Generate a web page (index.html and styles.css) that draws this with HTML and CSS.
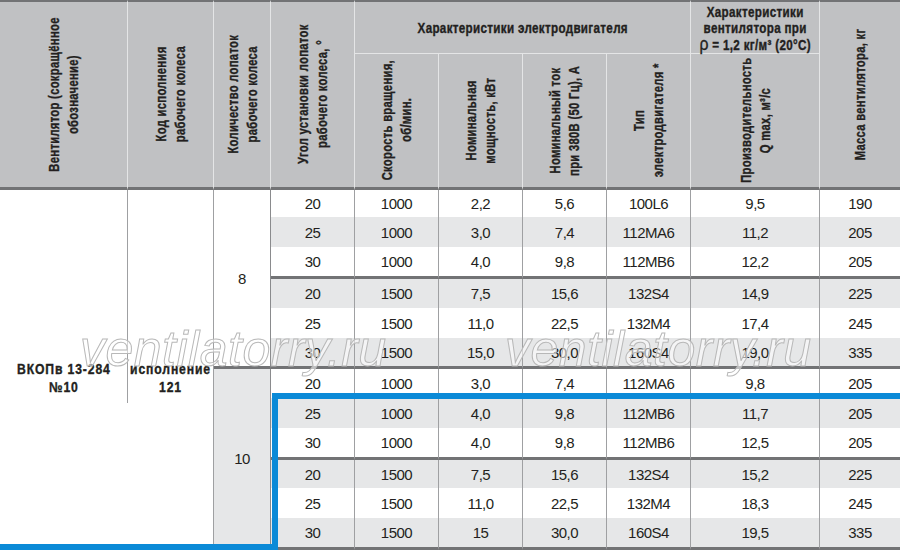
FILE: index.html
```html
<!DOCTYPE html>
<html lang="ru">
<head>
<meta charset="utf-8">
<title>ВКОПв 13-284 №10</title>
<link rel="stylesheet" href="styles.css">
</head>
<body>
<div class="sheet">
  <div class="table">
    <div class="h h-r1 h-tall"><div class="rot">Вентилятор (сокращённое<br>обозначение)</div></div>
    <div class="h h-r1 h-tall"><div class="rot">Код исполнения<br>рабочего колеса</div></div>
    <div class="h h-r1 h-tall"><div class="rot">Количество лопаток<br>рабочего колеса</div></div>
    <div class="h h-r1 h-tall"><div class="rot">Угол установки лопаток<br>рабочего колеса, °</div></div>
    <div class="h h-r1 h-group"><span class="hx">Характеристики электродвигателя</span></div>
    <div class="h h-r1 h-fan"><span class="hx">Характеристики<br>вентилятора при<br><span class="rho">ρ</span> = 1,2 кг/м³ (20°C)</span></div>
    <div class="h h-r1 h-tall h-last"><div class="rot">Масса вентилятора, кг</div></div>
    <div class="h h-sub"><div class="rot">Скорость вращения,<br>об/мин.</div></div>
    <div class="h h-sub"><div class="rot">Номинальная<br>мощность, кВт</div></div>
    <div class="h h-sub"><div class="rot">Номинальный ток<br>при 380В (50 Гц), А</div></div>
    <div class="h h-sub"><div class="rot">Тип<br>электродвигателя *</div></div>
    <div class="h h-sub"><div class="rot">Производительность<br>Q max, м³/с</div></div>

    <div class="row">
      <div class="c c-name"><span class="bx">ВКОПв 13-284<br>№10</span></div>
      <div class="c c-code"><span class="bx">исполнение<br>121</span></div>
      <div class="c c-blades8">8</div>
      <div class="c">20</div><div class="c">1000</div><div class="c">2,2</div><div class="c">5,6</div><div class="c">100L6</div><div class="c">9,5</div><div class="c">190</div>
    </div>
    <div class="row alt">
      <div class="c">25</div><div class="c">1000</div><div class="c">3,0</div><div class="c">7,4</div><div class="c">112MA6</div><div class="c">11,2</div><div class="c">205</div>
    </div>
    <div class="row end">
      <div class="c">30</div><div class="c">1000</div><div class="c">4,0</div><div class="c">9,8</div><div class="c">112MB6</div><div class="c">12,2</div><div class="c">205</div>
    </div>
    <div class="row alt">
      <div class="c">20</div><div class="c">1500</div><div class="c">7,5</div><div class="c">15,6</div><div class="c">132S4</div><div class="c">14,9</div><div class="c">225</div>
    </div>
    <div class="row">
      <div class="c">25</div><div class="c">1500</div><div class="c">11,0</div><div class="c">22,5</div><div class="c">132M4</div><div class="c">17,4</div><div class="c">245</div>
    </div>
    <div class="row alt end">
      <div class="c">30</div><div class="c">1500</div><div class="c">15,0</div><div class="c">30,0</div><div class="c">160S4</div><div class="c">19,0</div><div class="c">335</div>
    </div>
    <div class="row">
      <div class="c c-blades10">10</div>
      <div class="c">20</div><div class="c">1000</div><div class="c">3,0</div><div class="c">7,4</div><div class="c">112MA6</div><div class="c">9,8</div><div class="c">205</div>
    </div>
    <div class="row alt">
      <div class="c">25</div><div class="c">1000</div><div class="c">4,0</div><div class="c">9,8</div><div class="c">112MB6</div><div class="c">11,7</div><div class="c">205</div>
    </div>
    <div class="row end">
      <div class="c">30</div><div class="c">1000</div><div class="c">4,0</div><div class="c">9,8</div><div class="c">112MB6</div><div class="c">12,5</div><div class="c">205</div>
    </div>
    <div class="row alt">
      <div class="c">20</div><div class="c">1500</div><div class="c">7,5</div><div class="c">15,6</div><div class="c">132S4</div><div class="c">15,2</div><div class="c">225</div>
    </div>
    <div class="row">
      <div class="c">25</div><div class="c">1500</div><div class="c">11,0</div><div class="c">22,5</div><div class="c">132M4</div><div class="c">18,3</div><div class="c">245</div>
    </div>
    <div class="row alt end">
      <div class="c">30</div><div class="c">1500</div><div class="c">15</div><div class="c">30,0</div><div class="c">160S4</div><div class="c">19,5</div><div class="c">335</div>
    </div>
  </div>

  <span class="wm wm-1">ventilatorry.ru</span>
  <span class="wm wm-2">ventilatorry.ru</span>

  <div class="frame frame-top"></div>
  <div class="frame frame-side"></div>
  <div class="frame frame-bottom"></div>
</div>
</body>
</html>
```

FILE: styles.css
```css
* {
  box-sizing: border-box;
  margin: 0;
  padding: 0;
}

html,
body {
  width: 900px;
  height: 550px;
  overflow: hidden;
  background: #ffffff;
}

body {
  font-family: "Liberation Sans", Arial, sans-serif;
  color: #231f20;
}

.sheet {
  position: relative;
  width: 900px;
  height: 550px;
}

.table {
  display: grid;
  grid-template-columns: 128px 86px 57px 84px 84px 84px 84px 84px 129px 80px;
  grid-template-rows: 54px 136px 27px 30px 32px 29px 30px 31px 29px 30px 32px 28px 30px 32px;
}

/* header */
.h {
  display: flex;
  align-items: center;
  justify-content: center;
  text-align: center;
  background: #c0c1c3;
  border-right: 1px solid #e4e5e6;
  font-family: "Liberation Sans", Arial, sans-serif;
  font-weight: bold;
  font-size: 14px;
  letter-spacing: 0.4px;
  color: #231f20;
  -webkit-text-stroke: 0.35px #231f20;
  overflow: visible;
}

.h-r1 {
  border-top: 2px solid #727375;
}

.h-tall {
  grid-row: span 2;
  border-bottom: 3px solid #727375;
}

.h-group {
  grid-column: span 4;
  border-bottom: 1px solid #e4e5e6;
}

.h-fan {
  line-height: 16px;
  border-bottom: 1px solid #e4e5e6;
  padding-top: 1px;
}

.hx {
  display: inline-block;
  white-space: nowrap;
  transform: scaleX(0.83);
}

.rho {
  font-weight: normal;
  font-size: 19px;
  line-height: 16px;
}

.h-sub {
  border-bottom: 3px solid #727375;
}

.h-last {
  border-right: none;
}

.rot {
  flex: none;
  writing-mode: vertical-rl;
  white-space: nowrap;
  line-height: 18.5px;
  transform: rotate(180deg) scaleY(0.8);
}

/* body */
.row {
  display: contents;
}

.c {
  display: flex;
  align-items: center;
  justify-content: center;
  text-align: center;
  background: #ffffff;
  border-right: 1px solid #9fa0a2;
  font-size: 15px;
  letter-spacing: -0.5px;
}

.alt > .c {
  background: #e6e7e8;
}

.end > .c {
  border-bottom: 3px solid #727375;
}

.row > .c:last-child {
  border-right: none;
}

.c-name,
.c-code {
  grid-row: span 12;
  font-weight: bold;
  font-size: 14px;
  letter-spacing: 1px;
  line-height: 18.5px;
  padding-top: 16px;
  -webkit-text-stroke: 0.35px #231f20;
}

.bx {
  display: inline-block;
  white-space: nowrap;
  transform: scaleX(0.87);
}

.c-name {
  position: relative;
  border-right: none;
}

.c-name::after {
  content: "";
  position: absolute;
  top: 0;
  right: 0;
  width: 1px;
  height: 213px;
  background: #9fa0a2;
}

.c-blades8 {
  grid-row: span 6;
  border-bottom: 3px solid #727375;
  border-right-color: #8a8b8d;
}

.c-blades10 {
  grid-row: span 6;
  background: #e6e7e8;
  border-bottom: 3px solid #727375;
  border-right-color: #8a8b8d;
}

/* watermark */
.wm {
  position: absolute;
  top: 324px;
  font-family: "Liberation Sans", Arial, sans-serif;
  font-style: italic;
  font-size: 50px;
  line-height: 50px;
  letter-spacing: 0.5px;
  color: rgba(255, 255, 255, 0.55);
  -webkit-text-stroke: 1px #b8b8b8;
  pointer-events: none;
  white-space: nowrap;
}

.wm-1 {
  left: 80px;
}

.wm-2 {
  left: 505px;
}

/* blue highlight frame */
.frame {
  position: absolute;
  background: #0b8ad7;
}

.frame-top {
  left: 272px;
  top: 393px;
  width: 628px;
  height: 6px;
}

.frame-side {
  left: 272px;
  top: 393px;
  width: 6px;
  height: 157px;
}

.frame-bottom {
  left: 0;
  top: 544px;
  width: 278px;
  height: 6px;
}
```
